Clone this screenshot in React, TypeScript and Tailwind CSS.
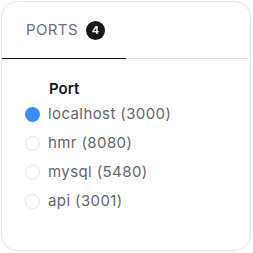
const ports = [
  { name: "localhost", port: 3000, active: true },
  { name: "hmr", port: 8080, active: false },
  { name: "mysql", port: 5480, active: false },
  { name: "api", port: 3001, active: false },
]

export default function App() {
  return (
    <div className="p-px font-['Inter',sans-serif]">
      <div className="flex h-[250px] w-[250px] flex-col rounded-2xl border border-[#e4e4e7] bg-white">
        <div className="flex border-b border-[#e4e4e7]">
          <div className="-mb-px flex h-[57px] w-1/2 items-center gap-2 border-b border-[#18181b] pl-6">
            <span className="text-[15px] tracking-wide text-[#71717a]">PORTS</span>
            <span className="flex h-[19px] w-[19px] items-center justify-center rounded-full bg-[#18181b] text-[11px] font-semibold text-white">
              4
            </span>
          </div>
        </div>
        <div className="pl-[23px] pr-6 pt-[19px]">
          <div className="pl-6 text-[15px] font-semibold leading-[21px] text-[#18181b]">Port</div>
          <div className="mt-px flex flex-col">
            {ports.map((p) => (
              <div key={p.name} className="flex h-[29px] items-center gap-2">
                <span
                  className={
                    p.active
                      ? "h-[15px] w-[15px] shrink-0 rounded-full bg-[#3b8bf6]"
                      : "h-[15px] w-[15px] shrink-0 rounded-full border border-[#e4e4e7] bg-white"
                  }
                />
                <span className="text-[15px] tracking-[0.4px] text-[#66666c]">
                  {p.name} ({p.port})
                </span>
              </div>
            ))}
          </div>
        </div>
      </div>
    </div>
  )
}
